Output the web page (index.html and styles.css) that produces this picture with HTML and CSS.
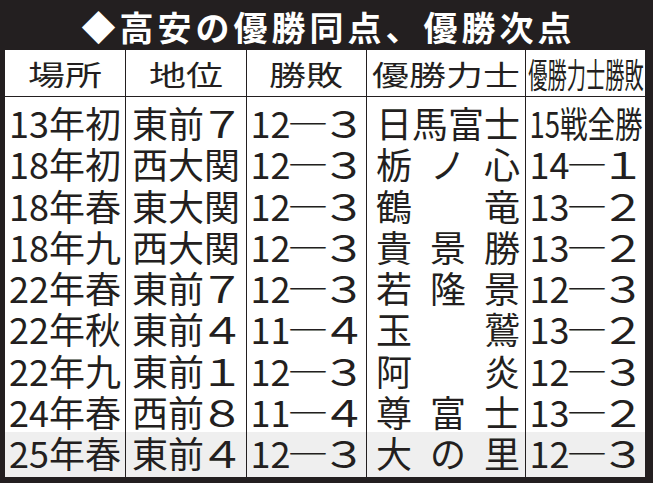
FILE: index.html
```html
<!DOCTYPE html>
<html lang="ja">
<head>
<meta charset="utf-8">
<title>高安の優勝同点、優勝次点</title>
<link rel="stylesheet" href="styles.css">
</head>
<body>
<div class="page">
  <div class="title"><span class="title-text">◆高安の優勝同点、優勝次点</span></div>
  <div class="table">
    <div class="row head">
      <div class="cell"><span class="wide">場所</span></div>
      <div class="cell"><span class="wide">地位</span></div>
      <div class="cell"><span class="wide">勝敗</span></div>
      <div class="cell"><span class="wide">優勝力士</span></div>
      <div class="cell"><span class="narrow-h">優勝力士勝敗</span></div>
    </div>
    <div class="row first">
      <div class="cell">13年初</div>
      <div class="cell">東前<span class="fw">７</span></div>
      <div class="cell">12<span class="dash">―</span><span class="fw">３</span></div>
      <div class="cell"><span class="name"><span>日</span><span>馬</span><span>富</span><span>士</span></span></div>
      <div class="cell"><span class="narrow">15戦全勝</span></div>
    </div>
    <div class="row">
      <div class="cell">18年初</div>
      <div class="cell">西大関</div>
      <div class="cell">12<span class="dash">―</span><span class="fw">３</span></div>
      <div class="cell"><span class="name"><span>栃</span><span>ノ</span><span>心</span></span></div>
      <div class="cell">14<span class="dash">―</span><span class="fw">１</span></div>
    </div>
    <div class="row">
      <div class="cell">18年春</div>
      <div class="cell">東大関</div>
      <div class="cell">12<span class="dash">―</span><span class="fw">３</span></div>
      <div class="cell"><span class="name"><span>鶴</span><span>竜</span></span></div>
      <div class="cell">13<span class="dash">―</span><span class="fw">２</span></div>
    </div>
    <div class="row">
      <div class="cell">18年九</div>
      <div class="cell">西大関</div>
      <div class="cell">12<span class="dash">―</span><span class="fw">３</span></div>
      <div class="cell"><span class="name"><span>貴</span><span>景</span><span>勝</span></span></div>
      <div class="cell">13<span class="dash">―</span><span class="fw">２</span></div>
    </div>
    <div class="row">
      <div class="cell">22年春</div>
      <div class="cell">東前<span class="fw">７</span></div>
      <div class="cell">12<span class="dash">―</span><span class="fw">３</span></div>
      <div class="cell"><span class="name"><span>若</span><span>隆</span><span>景</span></span></div>
      <div class="cell">12<span class="dash">―</span><span class="fw">３</span></div>
    </div>
    <div class="row">
      <div class="cell">22年秋</div>
      <div class="cell">東前<span class="fw">４</span></div>
      <div class="cell">11<span class="dash">―</span><span class="fw">４</span></div>
      <div class="cell"><span class="name"><span>玉</span><span>鷲</span></span></div>
      <div class="cell">13<span class="dash">―</span><span class="fw">２</span></div>
    </div>
    <div class="row">
      <div class="cell">22年九</div>
      <div class="cell">東前<span class="fw">１</span></div>
      <div class="cell">12<span class="dash">―</span><span class="fw">３</span></div>
      <div class="cell"><span class="name"><span>阿</span><span>炎</span></span></div>
      <div class="cell">12<span class="dash">―</span><span class="fw">３</span></div>
    </div>
    <div class="row">
      <div class="cell">24年春</div>
      <div class="cell">西前<span class="fw">８</span></div>
      <div class="cell">11<span class="dash">―</span><span class="fw">４</span></div>
      <div class="cell"><span class="name"><span>尊</span><span>富</span><span>士</span></span></div>
      <div class="cell">13<span class="dash">―</span><span class="fw">２</span></div>
    </div>
    <div class="row last">
      <div class="cell">25年春</div>
      <div class="cell">東前<span class="fw">４</span></div>
      <div class="cell">12<span class="dash">―</span><span class="fw">３</span></div>
      <div class="cell"><span class="name"><span>大</span><span>の</span><span>里</span></span></div>
      <div class="cell">12<span class="dash">―</span><span class="fw">３</span></div>
    </div>
  </div>
</div>
</body>
</html>
```

FILE: styles.css
```css
html, body {
  margin: 0;
  padding: 0;
}

body {
  font-family: "Noto Sans CJK JP", "Noto Sans", sans-serif;
  color: #231f20;
}

.page {
  width: 653px;
  height: 483px;
  background: #231f20;
  display: flex;
  flex-direction: column;
}

.title {
  box-sizing: border-box;
  height: 50px;
  padding: 4px 0 0 4px;
  display: flex;
  align-items: center;
  justify-content: center;
  color: #ffffff;
  font-weight: 700;
  font-size: 34px;
  letter-spacing: 4px;
  line-height: 1;
  white-space: nowrap;
}

.table {
  flex: 1;
  margin: 0 8px 6px 5px;
  background: #ffffff;
  display: flex;
  flex-direction: column;
}

.row {
  display: grid;
  grid-template-columns: 121px 121px 120px 159px 119px;
  height: 41.25px;
  font-size: 36px;
}

.cell {
  border-right: 1px solid #231f20;
  display: flex;
  align-items: center;
  justify-content: center;
  white-space: nowrap;
  line-height: 1;
}

.cell:last-child {
  border-right: none;
}

.row.head {
  height: 46px;
  border-bottom: 1px solid #231f20;
}

.row.head .cell {
  padding-top: 2px;
}

.row.first {
  height: 45.75px;
}

.row.first .cell {
  padding-top: 4.5px;
}

.row.last {
  height: 45.5px;
  background: #efefef;
}

.row.last .cell {
  padding-bottom: 4.25px;
}

.wide {
  display: inline-block;
  font-size: 28px;
  transform: scaleX(1.32);
}

.narrow-h {
  display: inline-block;
  font-size: 34px;
  transform: scaleX(0.565);
}

.narrow {
  display: inline-block;
  transform: scaleX(0.765);
}

.fw {
  display: inline-block;
  transform: scaleX(1.25);
}

.dash {
  display: inline-block;
  transform: scaleX(1.15);
}

.name {
  display: flex;
  justify-content: space-between;
  width: 144px;
  margin-left: 4px;
}
```
